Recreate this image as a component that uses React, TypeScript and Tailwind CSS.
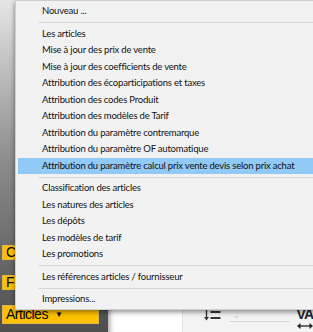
import React from "react";

type Entry = { label: string; active?: boolean } | "sep";

const entries: Entry[] = [
  { label: "Nouveau ..." },
  "sep",
  { label: "Les articles" },
  { label: "Mise à jour des prix de vente" },
  { label: "Mise à jour des coefficients de vente" },
  { label: "Attribution des écoparticipations et taxes" },
  { label: "Attribution des codes Produit" },
  { label: "Attribution des modèles de Tarif" },
  { label: "Attribution du paramètre contremarque" },
  { label: "Attribution du paramètre OF automatique" },
  { label: "Attribution du paramètre calcul prix vente devis selon prix achat", active: true },
  "sep",
  { label: "Classification des articles" },
  { label: "Les natures des articles" },
  { label: "Les dépôts" },
  { label: "Les modèles de tarif" },
  { label: "Les promotions" },
  "sep",
  { label: "Les références articles / fournisseur" },
  "sep",
  { label: "Impressions..." },
];

function SortIcon() {
  return (
    <svg width="17" height="11" viewBox="0 0 17 11" className="text-[#333]">
      <path d="M2.5 0v9" stroke="currentColor" strokeWidth="1.4" />
      <path d="M0 7l2.5 3.5L5 7z" fill="currentColor" />
      <rect x="6.5" y="1" width="10" height="2" fill="currentColor" />
      <rect x="6.5" y="7" width="10" height="2" fill="currentColor" />
    </svg>
  );
}

function SpacingArrow() {
  return (
    <svg width="16" height="6" viewBox="0 0 16 6" className="text-[#222]">
      <path d="M1 3h14" stroke="currentColor" strokeWidth="1.3" />
      <path d="M0 3l3.5-3v6zM16 3l-3.5-3v6z" fill="currentColor" />
    </svg>
  );
}

export default function App() {
  return (
    <div className="relative w-[313px] h-[332px] overflow-hidden bg-white" style={{ fontFamily: "Lato, 'Open Sans', sans-serif" }}>
      {/* window content behind the menu */}
      <div className="flex h-full">
        <div className="w-[110px] h-full flex flex-col justify-end pb-[8px] pl-[2px] bg-gradient-to-b from-[#e6e6e6] via-[#8a8a8a] to-[#4e4e4e]" style={{ fontFamily: "'Liberation Sans', Arial, sans-serif" }}>
          <div className="w-[60px] h-[15px] bg-[#ffc000] border border-[#e0b84a] text-[14px] leading-[13px] pl-[3px] text-black">C</div>
          <div className="mt-[15px] w-[60px] h-[15px] bg-[#ffc000] border border-[#e0b84a] text-[14px] leading-[13px] pl-[3px] text-black">F</div>
          <div className="mt-[15px] w-[97px] h-[19px] bg-[#ffc000] border border-[#e0b84a] flex items-center gap-[7px] pl-[3px] text-[14px] text-black tracking-[-0.5px]">
            <span>Articles</span>
            <span className="text-[8px]">▼</span>
          </div>
        </div>
        <div className="w-[75px] h-full bg-white shadow-[inset_6px_0_5px_-4px_rgba(0,0,0,0.35)]" />
        <div className="flex-1 h-full bg-[#f3f3f3] border-l border-[#e2e2e2] flex flex-col justify-end">
          <div className="flex items-start pl-[21px] h-[24px]">
            <div className="mt-[2px]"><SortIcon /></div>
            <div className="ml-[8px] w-[61px] h-[14px] border-b border-[#d6d6d6] flex items-center pl-[4px] text-[#c0c0c0] text-[8px]">⌄</div>
            <div className="ml-[7px] flex flex-col items-start text-[#222]">
              <span className="text-[14px] leading-[13px] font-semibold tracking-[-1px]" style={{ fontFamily: "'Liberation Sans', Arial, sans-serif" }}>VA</span>
              <div className="mt-[2px]"><SpacingArrow /></div>
            </div>
          </div>
        </div>
      </div>

      {/* dropdown menu */}
      <div className="absolute left-[15px] top-0 w-[310px] bg-[#f2f2f2] border border-[#cfcfcf] pt-[2px] pb-[1px] px-[2px] shadow-[0_2px_5px_rgba(0,0,0,0.45)]">
        {entries.map((e, i) =>
          e === "sep" ? (
            <div key={i} className="h-[6px] flex items-center pl-[20px]">
              <div className="w-full h-px bg-[#d7d7d7]" />
            </div>
          ) : (
            <div
              key={i}
              className={`h-[16.5px] flex items-center pl-[24px] text-[9.5px] tracking-[-0.2px] text-[#111] whitespace-nowrap ${e.active ? "bg-[#91c9f7]" : ""}`}
            >
              {e.label}
            </div>
          )
        )}
      </div>
    </div>
  );
}
